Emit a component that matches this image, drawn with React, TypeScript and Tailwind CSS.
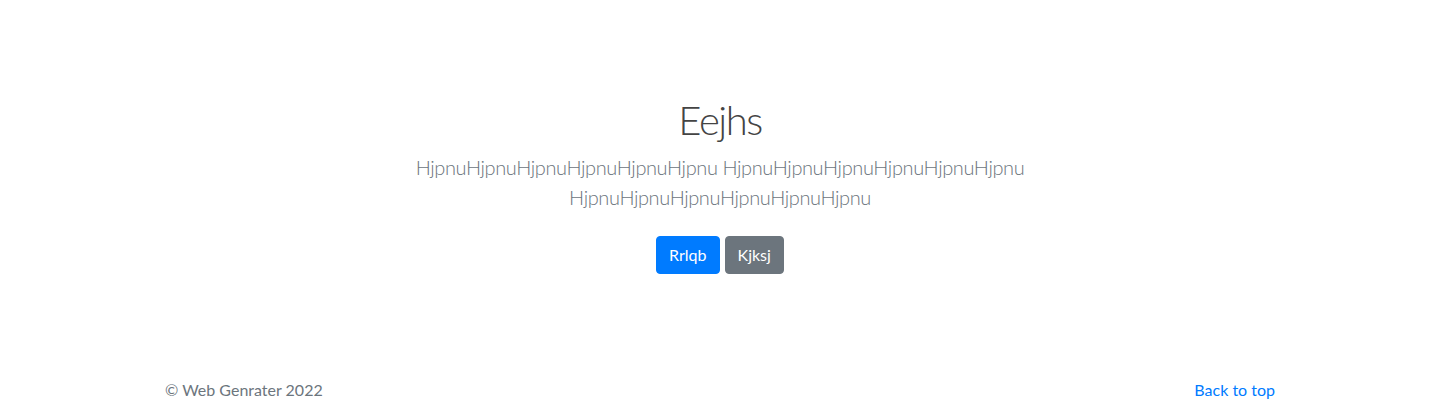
export default function App() {
  const word = 'HjpnuHjpnuHjpnuHjpnuHjpnuHjpnu'

  return (
    <div className="min-h-screen bg-white text-[16px] leading-6 text-[#212529] [font-family:Lato,'Open_Sans',sans-serif]">
      <main className="pt-12">
        <section className="py-12 text-center">
          <div className="mx-auto max-w-[670px] px-[15px]">
            <h1 className="mb-2 text-[40px] font-light leading-[48px] tracking-[-1.5px] text-[#444]">Eejhs</h1>
            <p className="mb-4 text-[20px] font-light leading-[30px] tracking-[-0.4px] text-[#6c757d]">
              {word} {word} {word}
            </p>
            <p className="flex justify-center gap-[5px]">
              <a
                href="#"
                className="my-2 rounded-[4px] border border-[#007bff] bg-[#007bff] px-3 py-[6px] text-white"
              >
                Rrlqb
              </a>
              <a
                href="#"
                className="my-2 rounded-[4px] border border-[#6c757d] bg-[#6c757d] px-3 py-[6px] text-white"
              >
                Kjksj
              </a>
            </p>
          </div>
        </section>
      </main>
      <footer className="py-12 text-[#6c757d]">
        <div className="mx-auto flex max-w-[1140px] justify-between px-[15px]">
          <p>© Web Genrater 2022</p>
          <p>
            <a href="#" className="text-[#007bff]">
              Back to top
            </a>
          </p>
        </div>
      </footer>
    </div>
  )
}
